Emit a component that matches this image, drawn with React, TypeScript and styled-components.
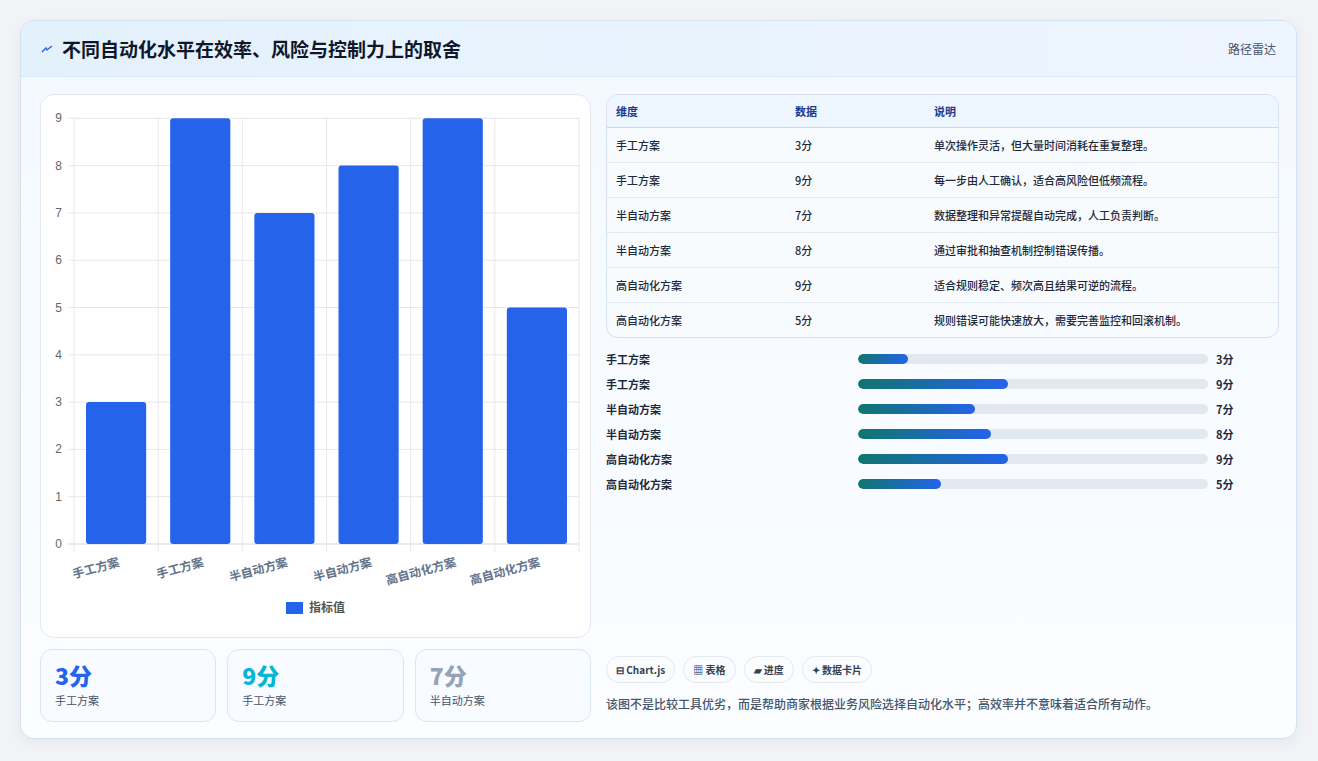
import React from "react";
import styled, { createGlobalStyle } from "styled-components";

const Global = createGlobalStyle`
  html, body { margin: 0; padding: 0; background: #f3f4f6; }
  body { font-family: "Noto Sans CJK SC", "Noto Sans", sans-serif; }
`;

const Page = styled.div`
  width: 1318px; height: 761px; box-sizing: border-box;
  padding: 20px 21px 22px 20px; background: #f1f3f6;
`;
const Card = styled.div`
  height: 100%; box-sizing: border-box; border: 1px solid #cfe3f2; border-radius: 14px;
  background: linear-gradient(180deg, #f4f9ff, #fbfdff); overflow: hidden;
  display: flex; flex-direction: column; box-shadow: 0 4px 14px rgba(0,0,0,0.05);
`;
const Header = styled.div`
  height: 55px; flex: none; display: flex; align-items: center; justify-content: space-between;
  padding: 0 20px 0 20px; background: linear-gradient(90deg, #e3f1fd, #eef5ff);
  border-bottom: 1px solid #dbe9f6;
`;
const Title = styled.h1`
  margin: 0; font-size: 19px; font-weight: 700; color: #0f172a; display: flex; align-items: center; gap: 9px;
`;
const Tag = styled.span` font-size: 12px; color: #475569; `;
const Body = styled.div`
  flex: 1; display: grid; grid-template-columns: 551px 673px; gap: 15px; padding: 17px 19px 17px 19px;
`;
const LeftCol = styled.div` display: flex; flex-direction: column; gap: 11px; `;
const ChartCard = styled.div`
  height: 544px; box-sizing: border-box; background: #fff; border: 1px solid #e2e8f0; border-radius: 14px; position: relative;
`;
const Kpis = styled.div` display: grid; grid-template-columns: repeat(3, 1fr); gap: 11px; `;
const Kpi = styled.div`
  height: 73px; box-sizing: border-box; border: 1px solid #dbe6f3; border-radius: 12px; background: #f8fbff;
  padding: 10px 14px;
`;
const KpiVal = styled.div<{ $c: string }>` font-size: 23px; font-weight: 800; color: ${p => p.$c}; line-height: 30px; `;
const KpiLbl = styled.div` font-size: 11px; color: #475569; margin-top: 2px; `;
const RightCol = styled.div` display: flex; flex-direction: column; `;
const Table = styled.table`
  width: 100%; border-collapse: separate; border-spacing: 0; border: 1px solid #d5e1ee; border-radius: 12px; overflow: hidden;
  font-size: 11px; color: #1e293b; background: #f8fbfe;
`;
const Th = styled.th<{ $w?: number }>`
  text-align: left; font-weight: 600; color: #1e3a8a; height: 32px; padding: 0 9px; background: #eef6ff;
  border-bottom: 1px solid #cbd9e8; width: ${p => (p.$w ? p.$w + "px" : "auto")};
`;
const Td = styled.td<{ $last?: boolean }>`
  height: 34px; padding: 0 9px; font-weight: 500; border-bottom: ${p => (p.$last ? "none" : "1px solid #e2e8f0")};
`;
const Bars = styled.div` display: flex; flex-direction: column; gap: 9px; margin-top: 13px; `;
const BarRow = styled.div` display: grid; grid-template-columns: 252px 350px 1fr; align-items: center; height: 16px; font-size: 11px; font-weight: 600; color: #1e293b; `;
const Track = styled.div` height: 10px; background: #e2e8f0; border-radius: 5px; overflow: hidden; `;
const Fill = styled.div` height: 100%; border-radius: 5px; background: linear-gradient(90deg, #0f766e, #2563eb); `;
const Val = styled.span` padding-left: 8px; `;
const Spacer = styled.div` flex: 1; `;
const Chips = styled.div` display: flex; gap: 8px; `;
const Chip = styled.span`
  height: 27px; box-sizing: border-box; padding: 0 9px; border: 1px solid #e2e8f0; border-radius: 14px; background: #fbfcfe;
  display: flex; align-items: center; gap: 3px; font-size: 10px; font-weight: 600; color: #334155;
`;
const Foot = styled.p` margin: 12px 0 10px; font-size: 12px; color: #475569; font-weight: 500; `;

const cats = ["手工方案", "手工方案", "半自动方案", "半自动方案", "高自动化方案", "高自动化方案"];
const vals = [3, 9, 7, 8, 9, 5];
const notes = ["单次操作灵活，但大量时间消耗在重复整理。", "每一步由人工确认，适合高风险但低频流程。", "数据整理和异常提醒自动完成，人工负责判断。", "通过审批和抽查机制控制错误传播。", "适合规则稳定、频次高且结果可逆的流程。", "规则错误可能快速放大，需要完善监控和回滚机制。"];

function Chart() {
  const x0 = 33, x1 = 538, y0 = 449, unit = 47.3;
  const cw = (x1 - x0) / 6;
  return (
    <svg width="549" height="542" style={{ display: "block" }}>
      {Array.from({ length: 10 }).map((_, i) => {
        const y = y0 - i * unit;
        return (
          <g key={i}>
            <line x1={x0 - 6} x2={x1} y1={y} y2={y} stroke={i === 0 ? "#cbd5e1" : "#e5e7eb"} />
            <text x={x0 - 12} y={y + 4} fontSize="12" fill="#666" textAnchor="end" fontFamily="Liberation Sans, sans-serif">{i}</text>
          </g>
        );
      })}
      {Array.from({ length: 7 }).map((_, i) => (
        <line key={i} x1={x0 + i * cw} x2={x0 + i * cw} y1={y0 - 9 * unit} y2={y0 + 8} stroke="#e5e7eb" />
      ))}
      {vals.map((v, i) => (
        <rect key={i} x={x0 + i * cw + 12} y={y0 - v * unit} width={cw - 24} height={v * unit} rx="3" fill="#2563eb" />
      ))}
      {cats.map((c, i) => {
        const cx = x0 + i * cw + cw / 2 + 4;
        return (
          <text key={i} x={cx} y={y0 + 22} fontSize="12" fontWeight="600" fill="#64748b" textAnchor="end" transform={`rotate(-15 ${cx} ${y0 + 22})`}>{c}</text>
        );
      })}
      <rect x="245" y="507" width="17" height="12" fill="#2563eb" />
      <text x="268" y="517" fontSize="12" fill="#555" fontWeight="600">指标值</text>
    </svg>
  );
}

export default function App() {
  return (
    <Page>
      <Global />
      <Card>
        <Header>
          <Title>
            <svg width="12" height="12" viewBox="0 0 12 12"><path d="M1 9 L5 5 L6 7 L11 3" stroke="#2563eb" strokeWidth="1.4" fill="none" /></svg>
            不同自动化水平在效率、风险与控制力上的取舍
          </Title>
          <Tag>路径雷达</Tag>
        </Header>
        <Body>
          <LeftCol>
            <ChartCard><Chart /></ChartCard>
            <Kpis>
              <Kpi><KpiVal $c="#2563eb">3分</KpiVal><KpiLbl>手工方案</KpiLbl></Kpi>
              <Kpi><KpiVal $c="#06b6d4">9分</KpiVal><KpiLbl>手工方案</KpiLbl></Kpi>
              <Kpi><KpiVal $c="#94a3b8">7分</KpiVal><KpiLbl>半自动方案</KpiLbl></Kpi>
            </Kpis>
          </LeftCol>
          <RightCol>
            <Table>
              <thead><tr><Th $w={161}>维度</Th><Th $w={121}>数据</Th><Th>说明</Th></tr></thead>
              <tbody>
                {cats.map((c, i) => (
                  <tr key={i}><Td $last={i === 5}>{c}</Td><Td $last={i === 5}>{vals[i]}分</Td><Td $last={i === 5}>{notes[i]}</Td></tr>
                ))}
              </tbody>
            </Table>
            <Bars>
              {cats.map((c, i) => (
                <BarRow key={i}><span>{c}</span><Track><Fill style={{ width: `${(vals[i] / 21) * 100}%` }} /></Track><Val>{vals[i]}分</Val></BarRow>
              ))}
            </Bars>
            <Spacer />
            <Chips>
              <Chip>⊟ Chart.js</Chip>
              <Chip>▦ 表格</Chip>
              <Chip>▰ 进度</Chip>
              <Chip>✦ 数据卡片</Chip>
            </Chips>
            <Foot>该图不是比较工具优劣，而是帮助商家根据业务风险选择自动化水平；高效率并不意味着适合所有动作。</Foot>
          </RightCol>
        </Body>
      </Card>
    </Page>
  );
}
